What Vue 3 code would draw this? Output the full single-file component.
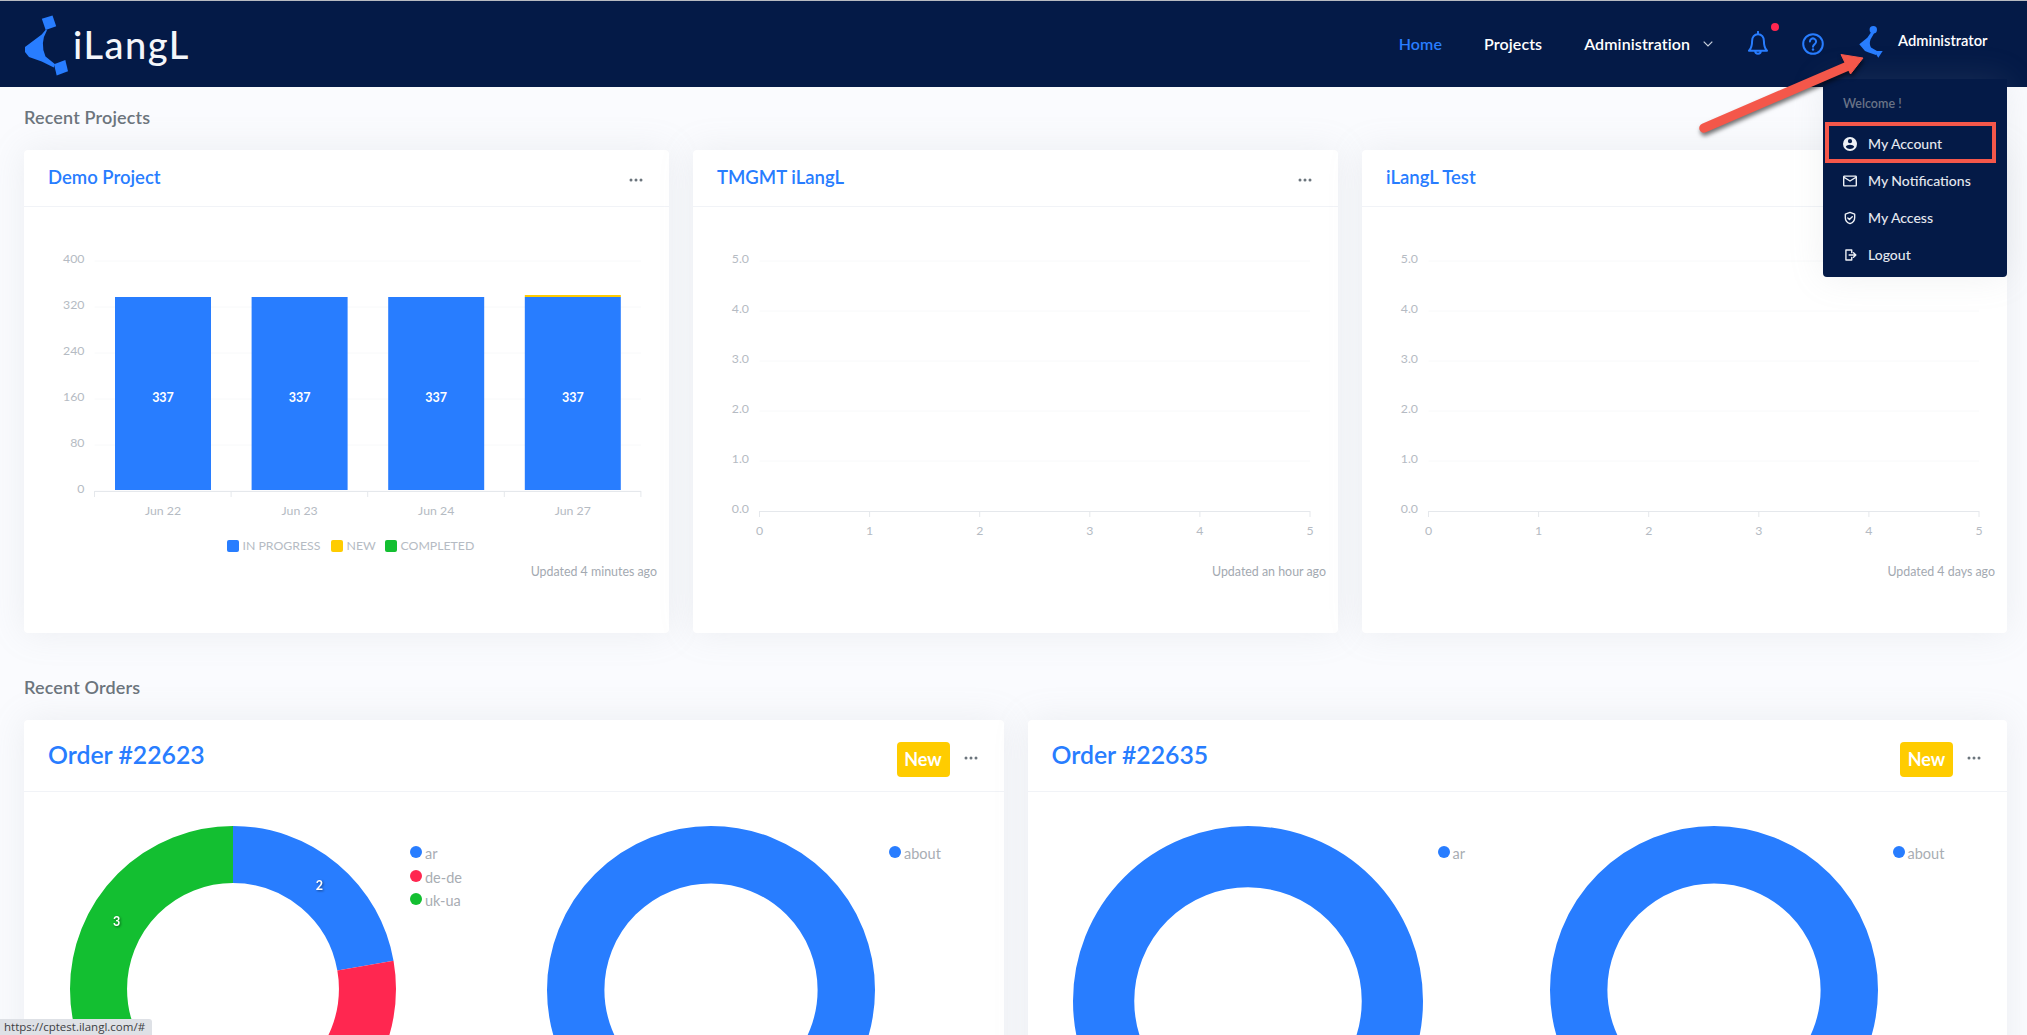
<script setup>
const projects = [
  { title: 'Demo Project', updated: 'Updated 4 minutes ago', kind: 'bar' },
  { title: 'TMGMT iLangL', updated: 'Updated an hour ago', kind: 'empty' },
  { title: 'iLangL Test', updated: 'Updated 4 days ago', kind: 'empty' }
]

const barGrid = [
  { y: 54, label: '400' },
  { y: 100, label: '320' },
  { y: 146, label: '240' },
  { y: 192, label: '160' },
  { y: 238, label: '80' },
  { y: 284, label: '0' }
]
const bars = [
  { label: 'Jun 22', value: 337, extra: 0 },
  { label: 'Jun 23', value: 337, extra: 0 },
  { label: 'Jun 24', value: 337, extra: 0 },
  { label: 'Jun 27', value: 337, extra: 2 }
]
const barStep = 136.6
const barLegend = [
  { x: 203, textX: 218.5, color: '#287dff', label: 'IN PROGRESS' },
  { x: 307, textX: 322.5, color: '#ffcc00', label: 'NEW' },
  { x: 361, textX: 376.5, color: '#13bf31', label: 'COMPLETED' }
]

const emptyGrid = [
  { y: 54, label: '5.0' },
  { y: 104, label: '4.0' },
  { y: 154, label: '3.0' },
  { y: 204, label: '2.0' },
  { y: 254, label: '1.0' },
  { y: 304, label: '0.0' }
]
const emptyTicks = [0, 1, 2, 3, 4, 5]

const blue = '#287dff'
const red = '#ff2750'
const green = '#13bf31'

const orders = [
  {
    title: 'Order #22623',
    donuts: [
      {
        size: 326,
        parts: [
          { name: 'ar', value: 2, color: blue, showLabel: true },
          { name: 'de-de', value: 4, color: red },
          { name: 'uk-ua', value: 3, color: green, showLabel: true }
        ]
      },
      { size: 328, parts: [{ name: 'about', value: 1, color: blue }] }
    ]
  },
  {
    title: 'Order #22635',
    donuts: [
      { size: 350, parts: [{ name: 'ar', value: 1, color: blue }] },
      { size: 328, parts: [{ name: 'about', value: 1, color: blue }] }
    ]
  }
]

// turns the values into dash segments on a circle of pathLength 360
const segments = (donut) => {
  const total = donut.parts.reduce((sum, p) => sum + p.value, 0)
  const mid = donut.size * 0.4125
  let start = 0
  return donut.parts.map((p) => {
    const sweep = (p.value / total) * 360
    const angle = ((start + sweep / 2) * Math.PI) / 180
    const seg = {
      ...p,
      sweep,
      start,
      labelX: donut.size / 2 + Math.sin(angle) * mid,
      labelY: donut.size / 2 - Math.cos(angle) * mid
    }
    start += sweep
    return seg
  })
}

const menu = ['My Account', 'My Notifications', 'My Access', 'Logout']
</script>

<template>
  <div class="page">
    <header class="topbar">
      <div class="brand">
        <svg class="brand-mark" width="50" height="65" viewBox="20 10 50 65">
          <path d="M41.8 16.7 52.5 13.5l3.7 10.8-10.500 3.6z" />
          <path d="M25 45 41.7 32.5 45.7 27.7 47 28.3Q39.500 41 45.500 54.500L54.800 62 53.800 65.500 41.700 59.500 29 55 25 50z" />
          <path d="M54 62.300 65.300 58 68 69.300 56.700 73.500z" />
        </svg>
        <span class="brand-name">iLangL</span>
      </div>

      <nav class="nav">
        <a class="nav-link active">Home</a>
        <a class="nav-link">Projects</a>
        <a class="nav-link">Administration</a>
        <svg class="chevron" width="10" height="6" viewBox="0 0 10 6">
          <path d="M.7.7 5 5 9.3.7" />
        </svg>
        <span class="bell">
          <svg width="24" height="26" viewBox="0 0 24 26">
            <path d="M12 3.2c-3.7 0-5.9 2.9-5.9 6.8 0 5-.9 7.5-3.1 9.8h18c-2.2-2.3-3.1-4.8-3.1-9.8 0-3.9-2.2-6.8-5.9-6.8zM12 .8v2.4M9.2 20a2.8 2.8 0 0 0 5.6 0" />
          </svg>
          <i class="bell-dot"></i>
        </span>
        <svg class="help" width="22" height="22" viewBox="0 0 22 22">
          <circle cx="11" cy="11" r="9.8" />
          <path d="M7.9 8.5a3.1 3.1 0 1 1 4.8 2.6c-1.1.8-1.7 1.3-1.7 2.7" />
          <circle class="help-dot" cx="11" cy="16.5" r="1.2" />
        </svg>
        <div class="profile">
          <svg width="24" height="32" viewBox="0 0 24 32">
            <circle cx="14.3" cy="3.7" r="3.7" />
            <path d="M.3 18.3 8.3 11.7 13 5l2.5 1.5-4 7Q10 18 12 21.5l6 3.5-1 4-8-2.800L6 25z" />
            <path d="M15 25 23.700 25 19.300 31.700z" />
          </svg>
          <span class="profile-name">Administrator</span>
        </div>
      </nav>
    </header>

    <div class="dropdown">
      <p class="welcome">Welcome !</p>
      <a v-for="(item, i) in menu" :key="item" class="menu-item" :class="{ marked: i === 0 }">
        <svg v-if="i === 0" width="14" height="14" viewBox="2 2 20 20">
          <path class="fill" d="M12,19.2C9.5,19.2 7.29,17.92 6,16C6.03,14 10,12.9 12,12.9C14,12.9 17.97,14 18,16C16.71,17.92 14.5,19.2 12,19.2M12,5A3,3 0 0,1 15,8A3,3 0 0,1 12,11A3,3 0 0,1 9,8A3,3 0 0,1 12,5M12,2A10,10 0 0,0 2,12A10,10 0 0,0 12,22A10,10 0 0,0 22,12C22,6.47 17.5,2 12,2Z" />
        </svg>
        <svg v-else-if="i === 1" width="14" height="14" viewBox="2 2 20 20">
          <path class="fill" d="M22 6C22 4.9 21.1 4 20 4H4C2.9 4 2 4.9 2 6V18C2 19.1 2.9 20 4 20H20C21.1 20 22 19.1 22 18V6M20 6L12 11L4 6H20M20 18H4V8L12 13L20 8V18Z" />
        </svg>
        <svg v-else-if="i === 2" width="14" height="14" viewBox="0 0 24 24">
          <path class="line" d="M12 2.5 20 5.5v6c0 5-3.3 8.5-8 10.2C7.3 20 4 16.5 4 11.5v-6zM8.3 12l2.7 2.7 4.900-5" />
        </svg>
        <svg v-else width="14" height="14" viewBox="0 0 24 24">
          <path class="line" d="M15 8V3.500H5v17h10V16M10.500 12H22M18 8l4 4-4 4" />
        </svg>
        <span>{{ item }}</span>
      </a>
    </div>

    <main class="content">
      <h2 class="section-title">Recent Projects</h2>
      <section class="project-row">
        <article v-for="project in projects" :key="project.title" class="card project-card">
          <div class="card-head">
            <h3 class="project-title">{{ project.title }}</h3>
            <svg class="more" width="14" height="4" viewBox="0 0 14 4">
              <circle cx="2" cy="2" r="1.5" /><circle cx="7" cy="2" r="1.5" /><circle cx="12" cy="2" r="1.5" />
            </svg>
          </div>

          <svg v-if="project.kind === 'bar'" class="chart" width="645" height="350" viewBox="0 0 645 350">
            <g v-for="g in barGrid" :key="g.label">
              <line class="grid-line" x1="70.5" x2="617" :y1="g.y" :y2="g.y" />
              <text class="tick" x="60.5" :y="g.y + 2" text-anchor="end">{{ g.label }}</text>
            </g>
            <line class="axis" x1="70.5" x2="617" y1="284.5" y2="284.5" />
            <line v-for="n in 5" :key="n" class="axis" :x1="70.5 + (n - 1) * barStep" :x2="70.5 + (n - 1) * barStep" y1="284" y2="290" />
            <g v-for="(bar, i) in bars" :key="bar.label">
              <rect :x="91 + i * barStep" y="90" width="96" height="193" fill="#287dff" />
              <rect v-if="bar.extra" :x="91 + i * barStep" :y="90 - bar.extra" width="96" :height="bar.extra" fill="#ffcc00" />
              <text class="bar-value" :x="139 + i * barStep" y="195" text-anchor="middle">{{ bar.value }}</text>
              <text class="tick" :x="139 + i * barStep" y="308" text-anchor="middle">{{ bar.label }}</text>
            </g>
            <g v-for="item in barLegend" :key="item.label">
              <rect :x="item.x" y="333" width="12" height="12" rx="2" :fill="item.color" />
              <text class="tick" :x="item.textX" y="343">{{ item.label }}</text>
            </g>
          </svg>

          <svg v-else class="chart" width="645" height="350" viewBox="0 0 645 350">
            <g v-for="g in emptyGrid" :key="g.label">
              <line v-if="g.y !== 304" class="grid-line" x1="66.5" x2="617" :y1="g.y" :y2="g.y" />
              <text class="tick" x="56" :y="g.y + 2" text-anchor="end">{{ g.label }}</text>
            </g>
            <line class="axis" x1="66.5" x2="617" y1="304.5" y2="304.5" />
            <g v-for="n in emptyTicks" :key="n">
              <line class="axis" :x1="66.5 + n * 110.1" :x2="66.5 + n * 110.1" y1="304" y2="310" />
              <text class="tick" :x="66.5 + n * 110.1" y="328" text-anchor="middle">{{ n }}</text>
            </g>
          </svg>

          <p class="updated">{{ project.updated }}</p>
        </article>
      </section>

      <h2 class="section-title orders-title">Recent Orders</h2>
      <section class="order-row">
        <article v-for="order in orders" :key="order.title" class="card">
          <div class="card-head order-head">
            <h3 class="order-title">{{ order.title }}</h3>
            <span class="badge">New</span>
            <svg class="more" width="14" height="4" viewBox="0 0 14 4">
              <circle cx="2" cy="2" r="1.5" /><circle cx="7" cy="2" r="1.5" /><circle cx="12" cy="2" r="1.5" />
            </svg>
          </div>
          <div class="donuts">
            <div v-for="(donut, d) in order.donuts" :key="d" class="donut-panel">
              <svg :width="donut.size" :height="donut.size" :viewBox="`0 0 ${donut.size} ${donut.size}`">
                <g :transform="`rotate(-90 ${donut.size / 2} ${donut.size / 2})`">
                  <circle
                    v-for="seg in segments(donut)"
                    :key="seg.name"
                    :cx="donut.size / 2"
                    :cy="donut.size / 2"
                    :r="donut.size * 0.4125"
                    :stroke-width="donut.size * 0.175"
                    :stroke="seg.color"
                    fill="none"
                    pathLength="360"
                    :stroke-dasharray="`${seg.sweep} ${360 - seg.sweep}`"
                    :stroke-dashoffset="-seg.start"
                  />
                </g>
                <template v-for="seg in segments(donut)" :key="seg.name">
                  <text v-if="seg.showLabel" class="donut-label" :x="seg.labelX" :y="seg.labelY + 4" text-anchor="middle">{{ seg.value }}</text>
                </template>
              </svg>
              <ul class="legend">
                <li v-for="part in donut.parts" :key="part.name">
                  <i class="legend-dot" :style="{ background: part.color }"></i>{{ part.name }}
                </li>
              </ul>
            </div>
          </div>
        </article>
      </section>
    </main>

    <svg class="callout" width="185" height="100" viewBox="0 0 185 100">
      <path class="callout-shaft" d="M14 83 158 21" />
      <path class="callout-head" d="M173 13 151 9.5 160.5 29z" />
    </svg>
    <div class="link-status">https://cptest.ilangl.com/#</div>
  </div>
</template>

<style>
html,
body {
  margin: 0;
  height: 100%;
  overflow: hidden;
  background: #fafbfe;
}
</style>

<style scoped>
.page {
  position: relative;
  height: 100vh;
  overflow: hidden;
  background: #fafbfe;
  font-family: Lato, "Open Sans", sans-serif;
  color: #6c757d;
}
.topbar {
  display: flex;
  align-items: center;
  justify-content: space-between;
  box-sizing: border-box;
  height: 87px;
  padding: 0 39.5px 0 20px;
  background: #041a47;
  border-top: 1px solid #b8bbc1;
}
.brand {
  display: flex;
  align-items: center;
  gap: 3px;
}
.brand-mark path {
  fill: #287dff;
}
.brand-name {
  font-size: 38px;
  font-weight: 500;
  letter-spacing: 1.5px;
  color: #f4f6fa;
}
.nav {
  display: flex;
  align-items: center;
}
.nav-link {
  margin: -2px 42px 0 0;
  font-size: 16px;
  font-weight: 600;
  letter-spacing: 0.1px;
  color: #fff;
}
.nav-link.active {
  color: #287dff;
}
.nav-link:nth-child(3) {
  margin-right: 13px;
}
.chevron {
  margin-right: 33px;
  fill: none;
  stroke: #c9d0dc;
  stroke-width: 1.2;
}
.bell {
  position: relative;
  display: flex;
  margin-right: 32px;
}
.bell svg {
  fill: none;
  stroke: #287dff;
  stroke-width: 2;
  stroke-linecap: round;
  stroke-linejoin: round;
}
.bell-dot {
  position: absolute;
  top: -8px;
  right: -9px;
  width: 8px;
  height: 8px;
  border-radius: 50%;
  background: #ff2750;
}
.help {
  margin-right: 35px;
  fill: none;
  stroke: #287dff;
  stroke-width: 2;
  stroke-linecap: round;
}
.help .help-dot {
  fill: #287dff;
  stroke: none;
}
.profile {
  display: flex;
  align-items: center;
  gap: 15px;
}
.profile svg {
  margin-top: -4px;
  fill: #287dff;
}
.profile-name {
  margin-top: -9px;
  font-size: 14.7px;
  font-weight: 600;
  color: #fff;
}
.dropdown {
  position: absolute;
  top: 79px;
  right: 20px;
  z-index: 2;
  box-sizing: border-box;
  width: 184.5px;
  height: 198px;
  padding-top: 16px;
  background: #041a47;
  border-radius: 0 0 4px 4px;
  box-shadow: 0 0 35px rgba(154, 161, 171, 0.15);
}
.welcome {
  margin: 0 0 12px;
  padding-left: 20.5px;
  font-size: 12.5px;
  font-weight: 600;
  line-height: 18px;
  color: #697386;
}
.menu-item {
  position: relative;
  display: flex;
  align-items: center;
  gap: 11px;
  height: 37px;
  padding-left: 20.5px;
  font-size: 14px;
  font-weight: 500;
  color: #e4e8ef;
}
.menu-item svg {
  flex: none;
}
.menu-item .fill {
  fill: #eef1f6;
}
.menu-item .line {
  fill: none;
  stroke: #eef1f6;
  stroke-width: 2.4;
  stroke-linejoin: round;
  stroke-linecap: round;
}
.menu-item.marked::after {
  content: "";
  position: absolute;
  top: -3.5px;
  left: 2px;
  width: 163px;
  height: 33px;
  border: 4px solid #f4574a;
}
.content {
  padding: 20px 20px 0 24px;
}
.section-title {
  margin: 0 0 23px;
  font-size: 18px;
  font-weight: 600;
  line-height: 20px;
  letter-spacing: 0.15px;
  color: #6c757d;
}
.orders-title {
  margin-top: 44px;
}
.project-row {
  display: grid;
  grid-template-columns: repeat(3, 1fr);
  gap: 24px;
}
.order-row {
  display: grid;
  grid-template-columns: repeat(2, 1fr);
  gap: 24px;
}
.card {
  background: #fff;
  border-radius: 4px;
  box-shadow: 0 0 35px rgba(154, 161, 171, 0.15);
}
.project-card {
  height: 483px;
}
.card-head {
  display: flex;
  align-items: center;
  justify-content: space-between;
  box-sizing: border-box;
  height: 57px;
  padding: 0 26px 0 24px;
  border-bottom: 1px solid #f1f3f7;
}
.project-title {
  margin: -2px 0 0;
  font-size: 18.5px;
  font-weight: 600;
  color: #287dff;
}
.more {
  flex: none;
  margin-top: 4px;
  fill: #6c757d;
}
.chart {
  display: block;
}
.grid-line {
  stroke: #f8f9fa;
  stroke-width: 1;
}
.axis {
  stroke: #e5e8ec;
  stroke-width: 1;
}
.tick {
  font-size: 12.3px;
  fill: #b5bbc3;
}
.bar-value {
  font-size: 12.5px;
  font-weight: 700;
  fill: #fff;
}
.updated {
  margin: 7px 12px 0 0;
  font-size: 12.4px;
  line-height: 16px;
  text-align: right;
  color: #a3a9b1;
}
.order-head {
  height: 72px;
}
.order-title {
  flex: 1;
  margin: -3px 0 0;
  font-size: 24.8px;
  font-weight: 600;
  color: #287dff;
}
.badge {
  box-sizing: border-box;
  width: 53px;
  height: 35px;
  margin: 7px 14px 0 0;
  font-size: 18px;
  font-weight: 700;
  line-height: 34px;
  text-align: center;
  color: #fff;
  background: #ffcc00;
  border-radius: 4px;
}
.donuts {
  display: grid;
  grid-template-columns: 477px 1fr;
  padding: 34px 0 0 45.5px;
}
.donut-panel {
  display: flex;
  align-items: flex-start;
  gap: 14.5px;
}
.donut-label {
  font-size: 12.5px;
  font-weight: 700;
  fill: #fff;
  filter: drop-shadow(1px 1px 1px rgba(0, 0, 0, 0.45));
}
.legend {
  margin: 0;
  padding: 16px 0 0;
  list-style: none;
}
.legend li {
  display: flex;
  align-items: center;
  height: 23.5px;
  font-size: 14.5px;
  color: #a8adb3;
}
.legend-dot {
  flex: none;
  width: 12px;
  height: 12px;
  margin: -3px 3px 0 0;
  border-radius: 50%;
}
.callout {
  position: absolute;
  top: 45px;
  left: 1690px;
  z-index: 3;
  overflow: visible;
  filter: drop-shadow(1px 3px 2px rgba(0, 0, 0, 0.55));
}
.callout-shaft {
  fill: none;
  stroke: #f4574a;
  stroke-width: 9.5;
  stroke-linecap: round;
}
.callout-head {
  fill: #f4574a;
  stroke: #f4574a;
  stroke-width: 1;
  stroke-linejoin: round;
}
.link-status {
  position: absolute;
  left: 0;
  bottom: 0;
  z-index: 4;
  box-sizing: border-box;
  width: 152px;
  height: 16px;
  padding-left: 4px;
  overflow: hidden;
  font-family: "Open Sans", sans-serif;
  font-size: 11.5px;
  line-height: 16px;
  color: #3c4043;
  background: #dee1e6;
  border-radius: 0 3px 0 0;
}
</style>
